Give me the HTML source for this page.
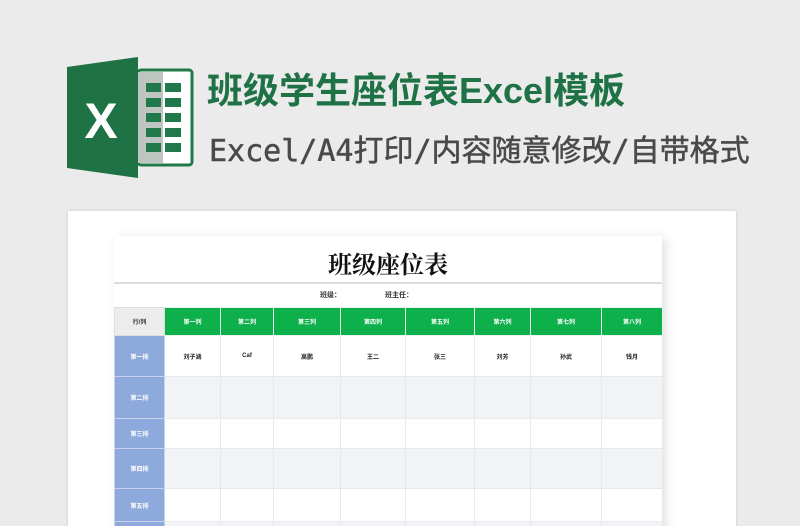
<!DOCTYPE html>
<html><head><meta charset="utf-8"><style>
*{margin:0;padding:0;box-sizing:border-box}
html,body{width:800px;height:526px;overflow:hidden}
body{background:#ebebeb;position:relative;font-family:"Liberation Sans","Noto Sans CJK SC",sans-serif}
.abs{position:absolute}
.title{left:207px;top:66px;font-size:36px;font-weight:bold;color:#1e7245;white-space:nowrap;line-height:50px}
.sub{left:209px;top:132px;font-size:30px;color:#4a4a4a;white-space:nowrap;font-family:"DejaVu Sans Mono","Noto Sans CJK SC",monospace;line-height:40px;-webkit-text-stroke:0.5px #4a4a4a}
.clip{left:0;top:0;width:800px;height:526px;overflow:hidden}
.card{left:68px;top:211px;width:668px;height:330px;background:#fff;box-shadow:0 0 3px rgba(0,0,0,.15)}
.sheet{left:114px;top:236px;width:548px;height:300px;background:#fff;box-shadow:4px 2px 10px rgba(0,0,0,.12)}
table{border-collapse:collapse;position:absolute;left:114px;top:307px;font-size:6px;font-weight:bold;color:#222}
td{border:1px solid #e6e8ec;text-align:center;padding:0}
tr.h td{background:#0db04b;color:#fff;border-color:#e8f5ec}
td.l{background:#8ea9db;color:#fff;border-color:#c8d3ea}
tr.g td{background:#f2f3f7}
tr.g td.l{background:#8ea9db}
</style></head><body>
<div class="abs clip">
<svg class="abs" style="left:66px;top:56px" width="130" height="126" viewBox="0 0 130 126">
<rect x="72" y="14" width="54" height="95" rx="3" fill="#fff" stroke="#21784a" stroke-width="3"/>
<rect x="72" y="16" width="25" height="91" fill="#bfc6c2"/>
<g fill="#21784a">
<rect x="80" y="27" width="15" height="9"/><rect x="99" y="27" width="16" height="9"/>
<rect x="80" y="42" width="15" height="9"/><rect x="99" y="42" width="16" height="9"/>
<rect x="80" y="57" width="15" height="9"/><rect x="99" y="57" width="16" height="9"/>
<rect x="80" y="72" width="15" height="9"/><rect x="99" y="72" width="16" height="9"/>
<rect x="80" y="87" width="15" height="9"/><rect x="99" y="87" width="16" height="9"/>
</g>
<path d="M1 11 L72 1 L72 122 L1 112 Z" fill="#1f7244"/>
<text x="35" y="82" text-anchor="middle" fill="#fff" font-family="Liberation Sans" font-weight="bold" font-size="50">X</text>
</svg>
<div class="abs title">班级学生座位表Excel模板</div>
<div class="abs sub">Excel/A4打印/内容随意修改/自带格式</div>
<div class="abs card"></div>
<div class="abs sheet"></div>
<div class="abs" style="left:114px;top:282px;width:548px;height:2px;background:#ddd"></div>
<div class="abs" style="left:114px;top:245px;width:548px;text-align:center;font-family:'Noto Serif CJK SC',serif;font-weight:bold;font-size:24px;color:#111">班级座位表</div>
<div class="abs" style="left:320px;top:290px;font-size:7px;font-weight:bold;color:#333">班级：</div>
<div class="abs" style="left:385px;top:290px;font-size:7px;font-weight:bold;color:#333">班主任：</div>
<table>
<colgroup><col style="width:50px"><col style="width:56px"><col style="width:53px"><col style="width:67px"><col style="width:65px"><col style="width:69px"><col style="width:56px"><col style="width:71px"><col style="width:61px"></colgroup>
<tr class="h" style="height:28px"><td style="background:#ececec;color:#333;border-color:#ddd">行/列</td><td>第一列</td><td>第二列</td><td>第三列</td><td>第四列</td><td>第五列</td><td>第六列</td><td>第七列</td><td>第八列</td></tr>
<tr style="height:41px"><td class="l">第一排</td><td>刘子涵</td><td>Caf</td><td>高鹏</td><td>王二</td><td>张三</td><td>刘芳</td><td>孙武</td><td>钱月</td></tr>
<tr class="g" style="height:42px"><td class="l">第二排</td><td></td><td></td><td></td><td></td><td></td><td></td><td></td><td></td></tr>
<tr style="height:30px"><td class="l">第三排</td><td></td><td></td><td></td><td></td><td></td><td></td><td></td><td></td></tr>
<tr class="g" style="height:40px"><td class="l">第四排</td><td></td><td></td><td></td><td></td><td></td><td></td><td></td><td></td></tr>
<tr style="height:33px"><td class="l">第五排</td><td></td><td></td><td></td><td></td><td></td><td></td><td></td><td></td></tr>
<tr class="g" style="height:30px"><td class="l"></td><td></td><td></td><td></td><td></td><td></td><td></td><td></td><td></td></tr>
</table>
</div>
</body></html>
